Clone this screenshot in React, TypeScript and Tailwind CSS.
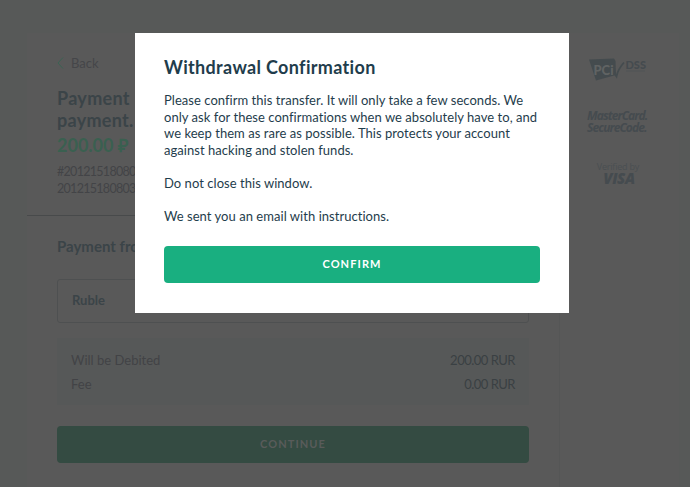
import React, { useState } from 'react';

const PciLogo = () => (
  <svg className="block h-[24px] w-[62px]" viewBox="0 0 62 24">
    <path d="M2 1.500 L27 0.500 L28.500 3 L29 17 L9 22.500 Z" fill="#444b4e" />
    <path d="M26 13.500 L29.500 18.500 Q31 11 37 4.500" fill="none" stroke="#444b4e" strokeWidth="1.800" />
    <text x="6.500" y="16.500" fontSize="13" fontWeight="900" fill="#606363" fontFamily="Lato, sans-serif" textLength="20" lengthAdjust="spacingAndGlyphs">
      PCi
    </text>
    <text x="38.500" y="10.500" fontSize="11.500" fontWeight="900" fill="#454b4f" fontFamily="Lato, sans-serif" textLength="20.500" lengthAdjust="spacingAndGlyphs">
      DSS
    </text>
    <path d="M39 13 H58" stroke="#505456" />
  </svg>
);

const MasterCardLogo = () => (
  <div className="w-[64px] font-['Open_Sans',sans-serif] text-[12px] leading-[12px] font-bold tracking-[-0.900px] whitespace-nowrap text-[#454b4f] italic">
    <div>MasterCard.</div>
    <div>SecureCode.</div>
  </div>
);

const VisaLogo = () => (
  <div className="flex w-[44px] flex-col items-center font-['Open_Sans',sans-serif] whitespace-nowrap text-[#454b4f]">
    <div className="text-[9px] leading-[11px] tracking-[-0.200px] text-[#4a4f52]">Verified by</div>
    <div className="ml-[2px] text-[15px] leading-[13px] font-extrabold tracking-[-0.400px] italic">VISA</div>
  </div>
);

const fees = [
  { label: 'Will be Debited', value: '200.00 RUR' },
  { label: 'Fee', value: '0.00 RUR' },
];

const App = () => {
  const [open, setOpen] = useState(true);

  return (
    <div className="relative h-[487px] w-[690px] overflow-hidden bg-[#575958] px-[27px] pt-[33px] font-['Lato',sans-serif] text-[#3b4448]">
      <div className="flex h-[454px] w-[652px] bg-[#595959]">
        <main className="w-[533px] shrink-0 border-r border-[#555656]">
          <header className="h-[183px] border-b border-[#484a4b] pt-[22px] pl-[30px]">
            <button className="flex h-4 items-center text-[13px] text-[#454649]" type="button">
              <svg className="mr-[7px] h-3 w-[7px]" viewBox="0 0 7 12" fill="none" stroke="#3b6353">
                <path d="M6 0.500 L1 6 L6 11.500" />
              </svg>
              <span className="relative top-px">Back</span>
            </button>
            <h1 className="mt-[16px] text-[18px] leading-[22px] font-bold tracking-[0.3px]">
              Payment –
              <br />
              payment.
            </h1>
            <div className="mt-[3px] text-[18px] leading-[22px] font-bold text-[#3a6050]">200.00 ₽</div>
            <p className="mt-[7px] text-[12.500px] leading-[17px] tracking-[-0.700px] text-[#434447]">
              #20121518080310
              <br />
              20121518080310
            </p>
          </header>
          <section className="pr-[30px] pl-[30px]">
            <h2 className="pt-[20px] text-[15px] leading-5 font-bold">Payment from</h2>
            <div className="mt-[23px] flex h-[44px] items-center rounded-[3px] border border-[#4e5051] px-[14px] text-[13px] font-bold">
              Ruble
            </div>
            <div className="mt-[15px] flex h-[67px] flex-col gap-2 bg-[#565858] px-[14px] pt-[14px] text-[13px] leading-4 text-[#424346]">
              {fees.map((fee) => (
                <div className="flex justify-between" key={fee.label}>
                  <span>{fee.label}</span>
                  <span className="tracking-[-0.500px] text-[#3a4043]">{fee.value}</span>
                </div>
              ))}
            </div>
            <button className="mt-[21px] h-[37px] w-full rounded-[4px] bg-[#344b42] text-[11px] font-bold tracking-[1.100px] text-[#595b5a]" type="button">
              CONTINUE
            </button>
          </section>
        </main>
        <aside className="flex flex-col pt-[25px] pl-[27px]">
          <PciLogo />
          <div className="mt-[28px]">
            <MasterCardLogo />
          </div>
          <div className="mt-[27px] ml-[9px]">
            <VisaLogo />
          </div>
        </aside>
      </div>

      {open && (
        <div className="absolute top-[33px] left-[135px] h-[280px] w-[434px] bg-white px-[29px] pt-[22px] text-[#1f3d4c]" role="dialog">
          <h2 className="text-[18px] leading-6 font-bold tracking-[0.330px]">Withdrawal Confirmation</h2>
          <div className="mt-[13px] text-[13px] leading-[16.600px] tracking-[0.040px] whitespace-nowrap">
            <p>
              Please confirm this transfer. It will only take a few seconds. We
              <br />
              only ask for these confirmations when we absolutely have to, and
              <br />
              we keep them as rare as possible. This protects your account
              <br />
              against hacking and stolen funds.
            </p>
            <p className="mt-[16.600px]">Do not close this window.</p>
            <p className="mt-[16.600px]">We sent you an email with instructions.</p>
          </div>
          <button
            className="mt-[21px] block h-[37px] w-[376px] rounded-[4px] bg-[#19af80] text-[11px] font-bold tracking-[1.100px] text-white"
            type="button"
            onClick={() => setOpen(false)}
          >
            CONFIRM
          </button>
        </div>
      )}
    </div>
  );
};

export default App;
